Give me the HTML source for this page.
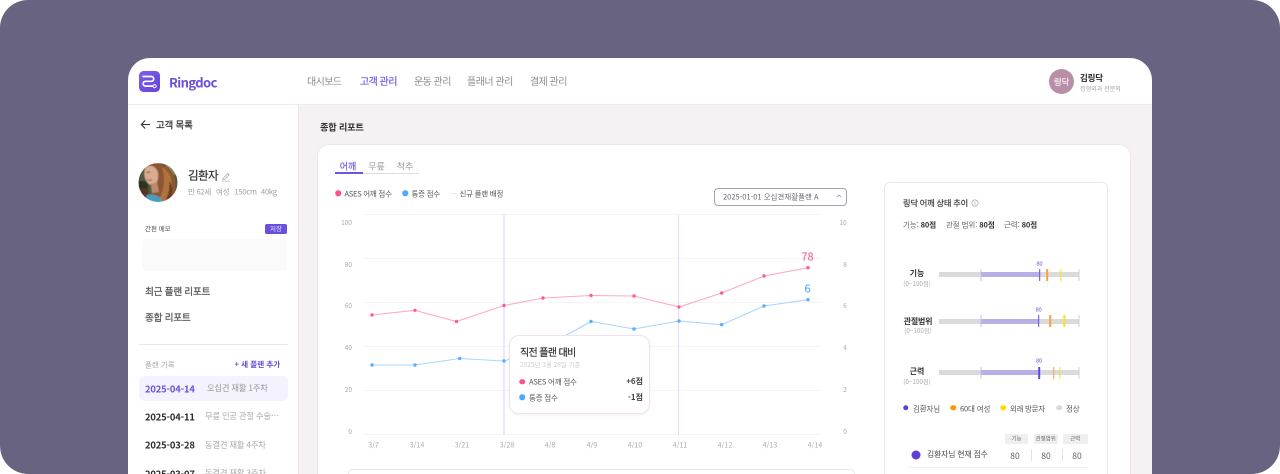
<!DOCTYPE html>
<html lang="ko">
<head>
<meta charset="utf-8">
<title>Ringdoc</title>
<style>
*{box-sizing:border-box}
html,body{margin:0;padding:0;width:1280px;height:474px;overflow:hidden;background:#fff}
body{font-family:"Noto Sans CJK KR","Liberation Sans",sans-serif;color:#333}
#bg{position:absolute;left:0;top:0;width:1280px;height:474px;background:#686380;border-radius:28px;overflow:hidden}
#app{position:absolute;left:128px;top:58px;width:1024px;height:416px;background:#fff;border-radius:22px 22px 0 0;overflow:hidden}
#root{position:absolute;left:0;top:0;width:1280px;height:474px;filter:blur(.35px);overflow:hidden}
.a{position:absolute}
.t{position:absolute;white-space:nowrap;line-height:1;transform:translateY(-50%)}
.c{transform:translate(-50%,-50%)}
.r{transform:translate(-100%,-50%)}
.m{-webkit-text-stroke:.22px currentColor}
.dot{position:absolute;border-radius:50%;transform:translate(-50%,-50%)}
.tick{position:absolute;transform:translateX(-50%)}
</style>
</head>
<body>
<div id="root">
<div id="bg"></div>
<div id="app"></div>

<!-- content areas -->
<div class="a" style="left:299px;top:105px;width:853px;height:369px;background:#f6f2f4"></div>
<div class="a" style="left:298px;top:105px;width:1px;height:369px;background:#efe6ea"></div>
<div class="a" style="left:128px;top:104px;width:1024px;height:1px;background:#f0e8ec"></div>

<!-- logo -->
<svg class="a" style="left:139px;top:71px" width="21" height="21" viewBox="0 0 21 21">
  <defs><linearGradient id="lg" x1="0" y1="0" x2="1" y2="1"><stop offset="0" stop-color="#7d5ff0"/><stop offset="1" stop-color="#6544d8"/></linearGradient></defs>
  <rect width="21" height="21" rx="4.5" fill="url(#lg)"/>
  <path d="M4 5.5H12.3a2.4 2.4 0 0 1 0 4.8H6.6a2.4 2.4 0 0 0 0 4.8H13.4" fill="none" stroke="#fff" stroke-width="1.7" stroke-linecap="round"/>
  <circle cx="15.6" cy="15.2" r="1.6" fill="none" stroke="#fff" stroke-width="1"/>
</svg>
<span class="t" style="left:169px;top:82px;font-size:13px;font-weight:700;color:#6a4fd8;letter-spacing:-.6px">Ringdoc</span>

<!-- nav -->
<span class="t" style="left:307px;top:80.5px;font-size:10px;color:#8c8c8c;letter-spacing:-.6px">대시보드</span>
<span class="t m" style="left:360px;top:80.5px;font-size:10px;color:#7a60e2;letter-spacing:-.55px">고객 관리</span>
<span class="t" style="left:414px;top:80.5px;font-size:10px;color:#8c8c8c;letter-spacing:-.55px">운동 관리</span>
<span class="t" style="left:467px;top:80.5px;font-size:10px;color:#8c8c8c;letter-spacing:-.5px">플래너 관리</span>
<span class="t" style="left:530px;top:80.5px;font-size:10px;color:#8c8c8c;letter-spacing:-.55px">결제 관리</span>

<!-- user -->
<div class="a" style="left:1049px;top:69px;width:25px;height:25px;border-radius:50%;background:#b98ea9"></div>
<span class="t c m" style="left:1061.5px;top:82px;font-size:8.5px;color:#f5eaf1;letter-spacing:-.2px">링닥</span>
<span class="t" style="left:1080px;top:77.5px;font-size:8.5px;font-weight:700;color:#222;letter-spacing:-.2px">김링닥</span>
<span class="t" style="left:1080px;top:88.5px;font-size:6.2px;color:#a5a5a5;letter-spacing:-.1px">정형외과 전문의</span>

<!-- sidebar -->
<svg class="a" style="left:140px;top:119px" width="11" height="11" viewBox="0 0 11 11"><path d="M10 5.5H1.5M5.2 1.5L1.3 5.5L5.2 9.5" fill="none" stroke="#333" stroke-width="1.1"/></svg>
<span class="t m" style="left:156px;top:125px;font-size:9.5px;color:#333;letter-spacing:-.2px">고객 목록</span>

<svg class="a" style="left:138px;top:163px" width="40" height="40" viewBox="0 0 40 40">
  <defs>
    <clipPath id="pc"><circle cx="20" cy="19.5" r="19.5"/></clipPath>
    <filter id="pb"><feGaussianBlur stdDeviation=".55"/></filter>
  </defs>
  <g clip-path="url(#pc)"><g filter="url(#pb)">
    <rect width="40" height="40" fill="#4f5a3a"/>
    <rect x="28" y="0" width="12" height="12" fill="#7f8b55"/>
    <rect x="0" y="18" width="10" height="22" fill="#2f3322"/>
    <path d="M8 1C20-2 34 2 37 16C39 27 36 34 30 40H10C15 32 14 24 12 18Z" fill="#8d5630"/>
    <path d="M24 4C31 8 35 15 33 25C32 31 29 35 26 40L20 38C26 28 28 16 24 4Z" fill="#b0733f"/>
    <path d="M31 18C36 24 35 32 31 38L28 36C31 30 32 24 31 18Z" fill="#6a3c20"/>
    <path d="M8 4C13 1 19 4 20 10C21 16 19 21 15 22C11 22.500 8 19 7 15C6 11 6 7 8 4Z" fill="#d9ac92"/>
    <path d="M13 21L19 19L21 29L14 30Z" fill="#bd8a6e"/>
    <path d="M4 34C10 30 17 31 23 35L25 40H2Z" fill="#4b9cc0"/>
    <path d="M0 26L9 26C10 30 8 34 7 40H0Z" fill="#5a3420"/>
    <path d="M8.500 9.500L12 9" stroke="#5a3a2c" stroke-width="1"/>
    <path d="M9 16.500C11 17.500 13 17.500 14 16.500" fill="none" stroke="#a8554e" stroke-width="1"/>
  </g></g>
</svg>

<span class="t m" style="left:188px;top:176px;font-size:11.5px;color:#333;letter-spacing:-.6px">김환자</span>
<svg class="a" style="left:221px;top:171px" width="10" height="11" viewBox="0 0 10 11"><path d="M2 7.5L6.8 2.4L8.2 3.7L3.4 8.8L1.8 9Z" fill="none" stroke="#aaa" stroke-width=".8"/><path d="M1 10.2H9" stroke="#bbb" stroke-width=".7"/></svg>
<span class="t" style="left:188px;top:192px;font-size:7.5px;color:#a0a0a0;letter-spacing:-.25px">만 62세</span>
<span class="t" style="left:216px;top:192px;font-size:7.5px;color:#a0a0a0;letter-spacing:-.2px">여성</span>
<span class="t" style="left:234.5px;top:192px;font-size:7.5px;color:#a0a0a0;letter-spacing:-.2px">150cm</span>
<span class="t" style="left:261px;top:192px;font-size:7.5px;color:#a0a0a0;letter-spacing:-.2px">40kg</span>

<span class="t" style="left:145px;top:228px;font-size:6.5px;color:#555">간편 메모</span>
<div class="a" style="left:265px;top:223.5px;width:22px;height:10px;background:#6a4fd8;border-radius:2px"></div>
<span class="t c" style="left:276px;top:228px;font-size:6.5px;color:#e6e0ff">저장</span>
<div class="a" style="left:142px;top:238.5px;width:145px;height:32px;background:#fafafa;border-radius:4px"></div>

<span class="t m" style="left:145px;top:291.5px;font-size:9.7px;color:#555;letter-spacing:-.3px">최근 플랜 리포트</span>
<span class="t m" style="left:145px;top:318px;font-size:9.7px;color:#555;letter-spacing:-.3px">종합 리포트</span>
<div class="a" style="left:139px;top:344px;width:149px;height:1px;background:#f0e4e8"></div>
<span class="t" style="left:145px;top:365px;font-size:7.5px;color:#aaa">플랜 기록</span>
<span class="t" style="left:234.5px;top:364.5px;font-size:7.6px;font-weight:700;color:#6a4fd8">+ 새 플랜 추가</span>

<div class="a" style="left:139px;top:376px;width:149px;height:25px;background:#f4f2fd;border-radius:6px"></div>
<span class="t" style="left:145px;top:388.5px;font-size:9.4px;font-weight:700;color:#6a4fd8;letter-spacing:-.15px">2025-04-14</span>
<span class="t" style="left:207px;top:388px;font-size:8.3px;color:#999;letter-spacing:-.2px">오십견 재활 1주차</span>
<span class="t" style="left:145px;top:416.5px;font-size:9.4px;font-weight:700;color:#2a2a2a;letter-spacing:-.15px">2025-04-11</span>
<span class="t" style="left:205px;top:416px;font-size:8.3px;color:#aaa;letter-spacing:-.2px">무릎 인공 관절 수술…</span>
<span class="t" style="left:145px;top:445px;font-size:9.4px;font-weight:700;color:#2a2a2a;letter-spacing:-.15px">2025-03-28</span>
<span class="t" style="left:205px;top:444.5px;font-size:8.3px;color:#aaa;letter-spacing:-.2px">동결견 재활 4주차</span>
<div class="a" style="left:139px;top:460px;width:150px;height:14px;overflow:hidden">
  <span class="t" style="left:6px;top:13.5px;font-size:9.4px;font-weight:700;color:#2a2a2a;letter-spacing:-.15px">2025-03-07</span>
  <span class="t" style="left:66px;top:13px;font-size:8.3px;color:#aaa;letter-spacing:-.2px">동결견 재활 3주차</span>
</div>

<!-- main -->
<span class="t" style="left:320px;top:127px;font-size:9.2px;font-weight:700;color:#333;letter-spacing:-.2px">종합 리포트</span>
<div class="a" style="left:317px;top:144px;width:813.5px;height:330px;background:#fff;border:1px solid #eee6ea;border-bottom:0;border-radius:12px 12px 0 0"></div>

<span class="t c m" style="left:348px;top:166px;font-size:9px;color:#7a60e2">어깨</span>
<span class="t c" style="left:376.5px;top:166px;font-size:9px;color:#a0a0a0">무릎</span>
<span class="t c" style="left:405px;top:166px;font-size:9px;color:#a0a0a0">척추</span>
<div class="a" style="left:363px;top:172.5px;width:56px;height:1px;background:#dcdce2"></div>
<div class="a" style="left:334.5px;top:172px;width:28.5px;height:2px;background:#7055dc"></div>

<div class="dot" style="left:338px;top:193px;width:5.5px;height:5.5px;background:#ff4f8b"></div>
<span class="t" style="left:344.5px;top:193.5px;font-size:7.5px;color:#555;letter-spacing:-.25px">ASES 어깨 점수</span>
<div class="dot" style="left:405px;top:193px;width:5.5px;height:5.5px;background:#4fa8ff"></div>
<span class="t" style="left:411.5px;top:193.5px;font-size:7.5px;color:#555;letter-spacing:-.25px">통증 점수</span>
<div class="a" style="left:451px;top:193px;width:5px;height:1px;background:#e4e4f6"></div>
<span class="t" style="left:459.5px;top:193.5px;font-size:7.5px;color:#555;letter-spacing:-.25px">신규 플랜 배정</span>

<div class="a" style="left:714px;top:188px;width:133px;height:17.5px;border:1px solid #a0a4b4;border-radius:4px;background:#fff"></div>
<span class="t" style="left:723px;top:197px;font-size:7.5px;color:#6b6b72">2025-01-01 오십견재활플랜 A</span>
<svg class="a" style="left:836px;top:194px" width="6" height="4" viewBox="0 0 6 4"><path d="M1 3L3 1L5 3" fill="none" stroke="#999" stroke-width=".8"/></svg>

<!-- chart -->
<svg class="a" style="left:0;top:0" width="1280" height="474" viewBox="0 0 1280 474">
  <g stroke="#f5f4f6" stroke-width="1">
    <path d="M363 214.5H820M363 258.5H820M363 302.5H820M363 346.5H820M363 390.5H820M363 434.5H820"/>
  </g>
  <path d="M504 215V435" stroke="#e4e3f8" stroke-width="1.6"/>
  <path d="M678.5 215V435" stroke="#dedcf8" stroke-width="1"/>
  <polyline fill="none" stroke="#ffa9c5" stroke-width="1.1" points="372,315 415,310.3 456.5,321.5 504,305.5 543,298 591,295.5 634,296 679,307 721.7,293 764,276 808,267.7"/>
  <polyline fill="none" stroke="#a8d5ff" stroke-width="1.1" points="372,365 415,365 459.7,358.5 504,361 543,348 591,321.5 634,329 679,321 721.7,324.7 764,306 808,299.7"/>
  <g fill="#ff5c93">
    <circle cx="372" cy="315" r="1.7"/><circle cx="415" cy="310.3" r="1.7"/><circle cx="456.5" cy="321.5" r="1.7"/><circle cx="504" cy="305.5" r="1.7"/><circle cx="543" cy="298" r="1.7"/><circle cx="591" cy="295.5" r="1.7"/><circle cx="634" cy="296" r="1.7"/><circle cx="679" cy="307" r="1.7"/><circle cx="721.7" cy="293" r="1.7"/><circle cx="764" cy="276" r="1.7"/><circle cx="808" cy="267.7" r="1.7"/>
  </g>
  <g fill="#58aeff">
    <circle cx="372" cy="365" r="1.7"/><circle cx="415" cy="365" r="1.7"/><circle cx="459.7" cy="358.5" r="1.7"/><circle cx="504" cy="361" r="1.7"/><circle cx="591" cy="321.5" r="1.7"/><circle cx="634" cy="329" r="1.7"/><circle cx="679" cy="321" r="1.7"/><circle cx="721.7" cy="324.7" r="1.7"/><circle cx="764" cy="306" r="1.7"/><circle cx="808" cy="299.7" r="1.7"/>
  </g>
</svg>

<span class="t r" style="left:352px;top:221.5px;font-size:6.5px;color:#aaa">100</span>
<span class="t r" style="left:352px;top:263.5px;font-size:6.5px;color:#aaa">80</span>
<span class="t r" style="left:352px;top:305px;font-size:6.5px;color:#aaa">60</span>
<span class="t r" style="left:352px;top:347px;font-size:6.5px;color:#aaa">40</span>
<span class="t r" style="left:352px;top:388.5px;font-size:6.5px;color:#aaa">20</span>
<span class="t r" style="left:352px;top:430.5px;font-size:6.5px;color:#aaa">0</span>

<span class="t c" style="left:843px;top:221.5px;font-size:6.5px;color:#aaa">10</span>
<span class="t c" style="left:845px;top:263.5px;font-size:6.5px;color:#aaa">8</span>
<span class="t c" style="left:845px;top:305px;font-size:6.5px;color:#aaa">6</span>
<span class="t c" style="left:845px;top:347px;font-size:6.5px;color:#aaa">4</span>
<span class="t c" style="left:845px;top:388.5px;font-size:6.5px;color:#aaa">2</span>
<span class="t c" style="left:845px;top:430.5px;font-size:6.5px;color:#aaa">0</span>

<span class="t c" style="left:373.5px;top:445.7px;font-size:7px;color:#aaa">3/7</span>
<span class="t c" style="left:417px;top:445.7px;font-size:7px;color:#aaa">3/14</span>
<span class="t c" style="left:462px;top:445.7px;font-size:7px;color:#aaa">3/21</span>
<span class="t c" style="left:507px;top:445.7px;font-size:7px;color:#aaa">3/28</span>
<span class="t c" style="left:550px;top:445.7px;font-size:7px;color:#aaa">4/8</span>
<span class="t c" style="left:592px;top:445.7px;font-size:7px;color:#aaa">4/9</span>
<span class="t c" style="left:635px;top:445.7px;font-size:7px;color:#aaa">4/10</span>
<span class="t c" style="left:680px;top:445.7px;font-size:7px;color:#aaa">4/11</span>
<span class="t c" style="left:725px;top:445.7px;font-size:7px;color:#aaa">4/12</span>
<span class="t c" style="left:770px;top:445.7px;font-size:7px;color:#aaa">4/13</span>
<span class="t c" style="left:815px;top:445.7px;font-size:7px;color:#aaa">4/14</span>

<span class="t c m" style="left:807.5px;top:257px;font-size:11px;color:#ff6b9d">78</span>
<span class="t c m" style="left:807.5px;top:288.5px;font-size:11px;color:#5eb2ff">6</span>

<!-- tooltip -->
<div class="a" style="left:509px;top:335px;width:140.5px;height:78.5px;background:#fff;border:1px solid #f0e2e8;border-radius:10px;box-shadow:0 1px 3px rgba(120,90,110,.08)"></div>
<span class="t m" style="left:520px;top:352px;font-size:10px;color:#333;letter-spacing:-.65px">직전 플랜 대비</span>
<span class="t" style="left:520px;top:364px;font-size:6.5px;color:#ccc">2025년 3월 28일 기준</span>
<div class="dot" style="left:522px;top:381.5px;width:5.5px;height:5.5px;background:#ff4f8b"></div>
<span class="t" style="left:529px;top:382px;font-size:7.5px;color:#555;letter-spacing:-.2px">ASES 어깨 점수</span>
<span class="t r" style="left:643px;top:382px;font-size:8px;font-weight:700;color:#444">+6점</span>
<div class="dot" style="left:522px;top:397px;width:5.5px;height:5.5px;background:#4fa8ff"></div>
<span class="t" style="left:529px;top:397.5px;font-size:7.5px;color:#555;letter-spacing:-.2px">통증 점수</span>
<span class="t r" style="left:643px;top:398px;font-size:8px;font-weight:700;color:#444">-1점</span>

<div class="a" style="left:348px;top:469px;width:507px;height:5px;border:1px solid #f0e2e6;border-bottom:0;border-radius:8px 8px 0 0;background:#fff"></div>

<!-- right panel -->
<div class="a" style="left:884px;top:182px;width:224px;height:292px;border:1px solid #f0e6ea;border-bottom:0;border-radius:6px 6px 0 0;background:#fff"></div>
<span class="t m" style="left:903px;top:203px;font-size:8.2px;color:#444;letter-spacing:-.2px">링닥 어깨 상태 추이</span>
<svg class="a" style="left:971px;top:199px" width="8" height="8" viewBox="0 0 8 8"><circle cx="4" cy="4" r="3.2" fill="none" stroke="#999" stroke-width=".6"/><path d="M4 3.4V6M4 2V2.7" stroke="#999" stroke-width=".6"/></svg>

<span class="t" style="left:903px;top:225px;font-size:7.5px;color:#666;letter-spacing:-.1px">기능: <b style="color:#333">80점</b></span>
<span class="t" style="left:946px;top:225px;font-size:7.5px;color:#666;letter-spacing:-.1px">관절 범위: <b style="color:#333">80점</b></span>
<span class="t" style="left:1004px;top:225px;font-size:7.5px;color:#666;letter-spacing:-.1px">근력: <b style="color:#333">80점</b></span>

<!-- row 1 -->
<span class="t c" style="left:917px;top:273.5px;font-size:8px;font-weight:700;color:#333">기능</span>
<span class="t c" style="left:917px;top:283.5px;font-size:6.3px;color:#aaa">(0~100점)</span>
<div class="a" style="left:939px;top:272px;width:140px;height:5px;background:#dadada"></div>
<div class="a" style="left:981px;top:272px;width:58px;height:5px;background:#b7b0e6"></div>
<div class="tick" style="left:981px;top:268.5px;width:1px;height:12px;background:#c4bdec"></div>
<div class="tick" style="left:1039.5px;top:268.5px;width:1.6px;height:12px;background:#6149dc"></div>
<div class="tick" style="left:1047px;top:268.5px;width:1.6px;height:12px;background:#f9a23c"></div>
<div class="tick" style="left:1060.5px;top:268.5px;width:1.4px;height:12px;background:#ffdf20"></div>
<div class="tick" style="left:1079px;top:268.5px;width:1px;height:12px;background:#cfcfcf"></div>
<span class="t c" style="left:1039.5px;top:263.5px;font-size:5.5px;color:#8a78e0;-webkit-text-stroke:.15px #8a78e0">80</span>

<!-- row 2 -->
<span class="t c" style="left:918px;top:321.5px;font-size:8px;font-weight:700;color:#333;letter-spacing:-.2px">관절범위</span>
<span class="t c" style="left:918px;top:331px;font-size:6.3px;color:#aaa">(0~100점)</span>
<div class="a" style="left:939px;top:318.5px;width:140px;height:5px;background:#dadada"></div>
<div class="a" style="left:981px;top:318.5px;width:58px;height:5px;background:#b7b0e6"></div>
<div class="tick" style="left:981px;top:315px;width:1px;height:12px;background:#c4bdec"></div>
<div class="tick" style="left:1038.7px;top:315px;width:1.6px;height:12px;background:#6149dc"></div>
<div class="tick" style="left:1050px;top:315px;width:1.6px;height:12px;background:#f9a23c"></div>
<div class="tick" style="left:1064.3px;top:315px;width:1.4px;height:12px;background:#ffdf20"></div>
<div class="tick" style="left:1079px;top:315px;width:1px;height:12px;background:#cfcfcf"></div>
<span class="t c" style="left:1038.7px;top:310px;font-size:5.5px;color:#8a78e0;-webkit-text-stroke:.15px #8a78e0">80</span>

<!-- row 3 -->
<span class="t c" style="left:917px;top:372px;font-size:8px;font-weight:700;color:#333">근력</span>
<span class="t c" style="left:917px;top:382px;font-size:6.3px;color:#aaa">(0~100점)</span>
<div class="a" style="left:939px;top:370px;width:140px;height:5px;background:#dadada"></div>
<div class="a" style="left:981px;top:370px;width:58px;height:5px;background:#b7b0e6"></div>
<div class="tick" style="left:981px;top:366.5px;width:1px;height:12px;background:#c4bdec"></div>
<div class="tick" style="left:1039px;top:366.5px;width:1.6px;height:12px;background:#6149dc"></div>
<div class="tick" style="left:1053.7px;top:366.5px;width:1.6px;height:12px;background:#f9a23c"></div>
<div class="tick" style="left:1060px;top:366.5px;width:1.4px;height:12px;background:#ffdf20"></div>
<div class="tick" style="left:1079px;top:366.5px;width:1px;height:12px;background:#cfcfcf"></div>
<span class="t c" style="left:1039px;top:361px;font-size:5.5px;color:#8a78e0;-webkit-text-stroke:.15px #8a78e0">80</span>

<!-- legend -->
<div class="dot" style="left:905.5px;top:407.5px;width:5.5px;height:5.5px;background:#5e3fd8"></div>
<span class="t" style="left:913px;top:408.5px;font-size:7.5px;color:#555;letter-spacing:-.15px">김환자님</span>
<div class="dot" style="left:953px;top:407.5px;width:5.5px;height:5.5px;background:#ff9500"></div>
<span class="t" style="left:960px;top:408.5px;font-size:7.5px;color:#555;letter-spacing:-.15px">60대 여성</span>
<div class="dot" style="left:1003px;top:407.5px;width:5.5px;height:5.5px;background:#ffdc00"></div>
<span class="t" style="left:1010px;top:408.5px;font-size:7.5px;color:#555;letter-spacing:-.3px">외래 방문자</span>
<div class="dot" style="left:1059px;top:407.5px;width:5.5px;height:5.5px;background:#d9d9d9"></div>
<span class="t" style="left:1066px;top:408.5px;font-size:7.5px;color:#555;letter-spacing:-.15px">정상</span>

<!-- score table -->
<div class="a" style="left:1005px;top:434px;width:23px;height:10px;background:#efefef;border-radius:1.5px"></div>
<div class="a" style="left:1034px;top:434px;width:23.5px;height:10px;background:#efefef;border-radius:1.5px"></div>
<div class="a" style="left:1063px;top:434px;width:24.5px;height:10px;background:#efefef;border-radius:1.5px"></div>
<span class="t c" style="left:1016.5px;top:439px;font-size:5.5px;color:#666">기능</span>
<span class="t c" style="left:1045.7px;top:439px;font-size:5.5px;color:#666">관절범위</span>
<span class="t c" style="left:1075.2px;top:439px;font-size:5.5px;color:#666">근력</span>
<div class="dot" style="left:915.5px;top:455px;width:9px;height:9px;background:#5e3fd8"></div>
<span class="t" style="left:927px;top:455px;font-size:7.8px;color:#444;letter-spacing:-.1px">김환자님 현재 점수</span>
<span class="t c" style="left:1015px;top:455.5px;font-size:8.5px;color:#666">80</span>
<span class="t c" style="left:1046px;top:455.5px;font-size:8.5px;color:#666">80</span>
<span class="t c" style="left:1077px;top:455.5px;font-size:8.5px;color:#666">80</span>
<div class="a" style="left:1031px;top:449px;width:1px;height:12px;background:#e2e2e2"></div>
<div class="a" style="left:1061.5px;top:449px;width:1px;height:12px;background:#e2e2e2"></div>
<div class="a" style="left:907px;top:467px;width:181px;height:1px;background:#eee"></div>

<!-- bottom rounded corners of backdrop -->
<svg class="a" style="left:0;top:0;pointer-events:none" width="1280" height="474" viewBox="0 0 1280 474">
  <path d="M1252 474A28 28 0 0 0 1280 446V474Z" fill="#fff"/>
  <path d="M28 474A28 28 0 0 1 0 446V474Z" fill="#fff"/>
</svg>
</div>
</body>
</html>
